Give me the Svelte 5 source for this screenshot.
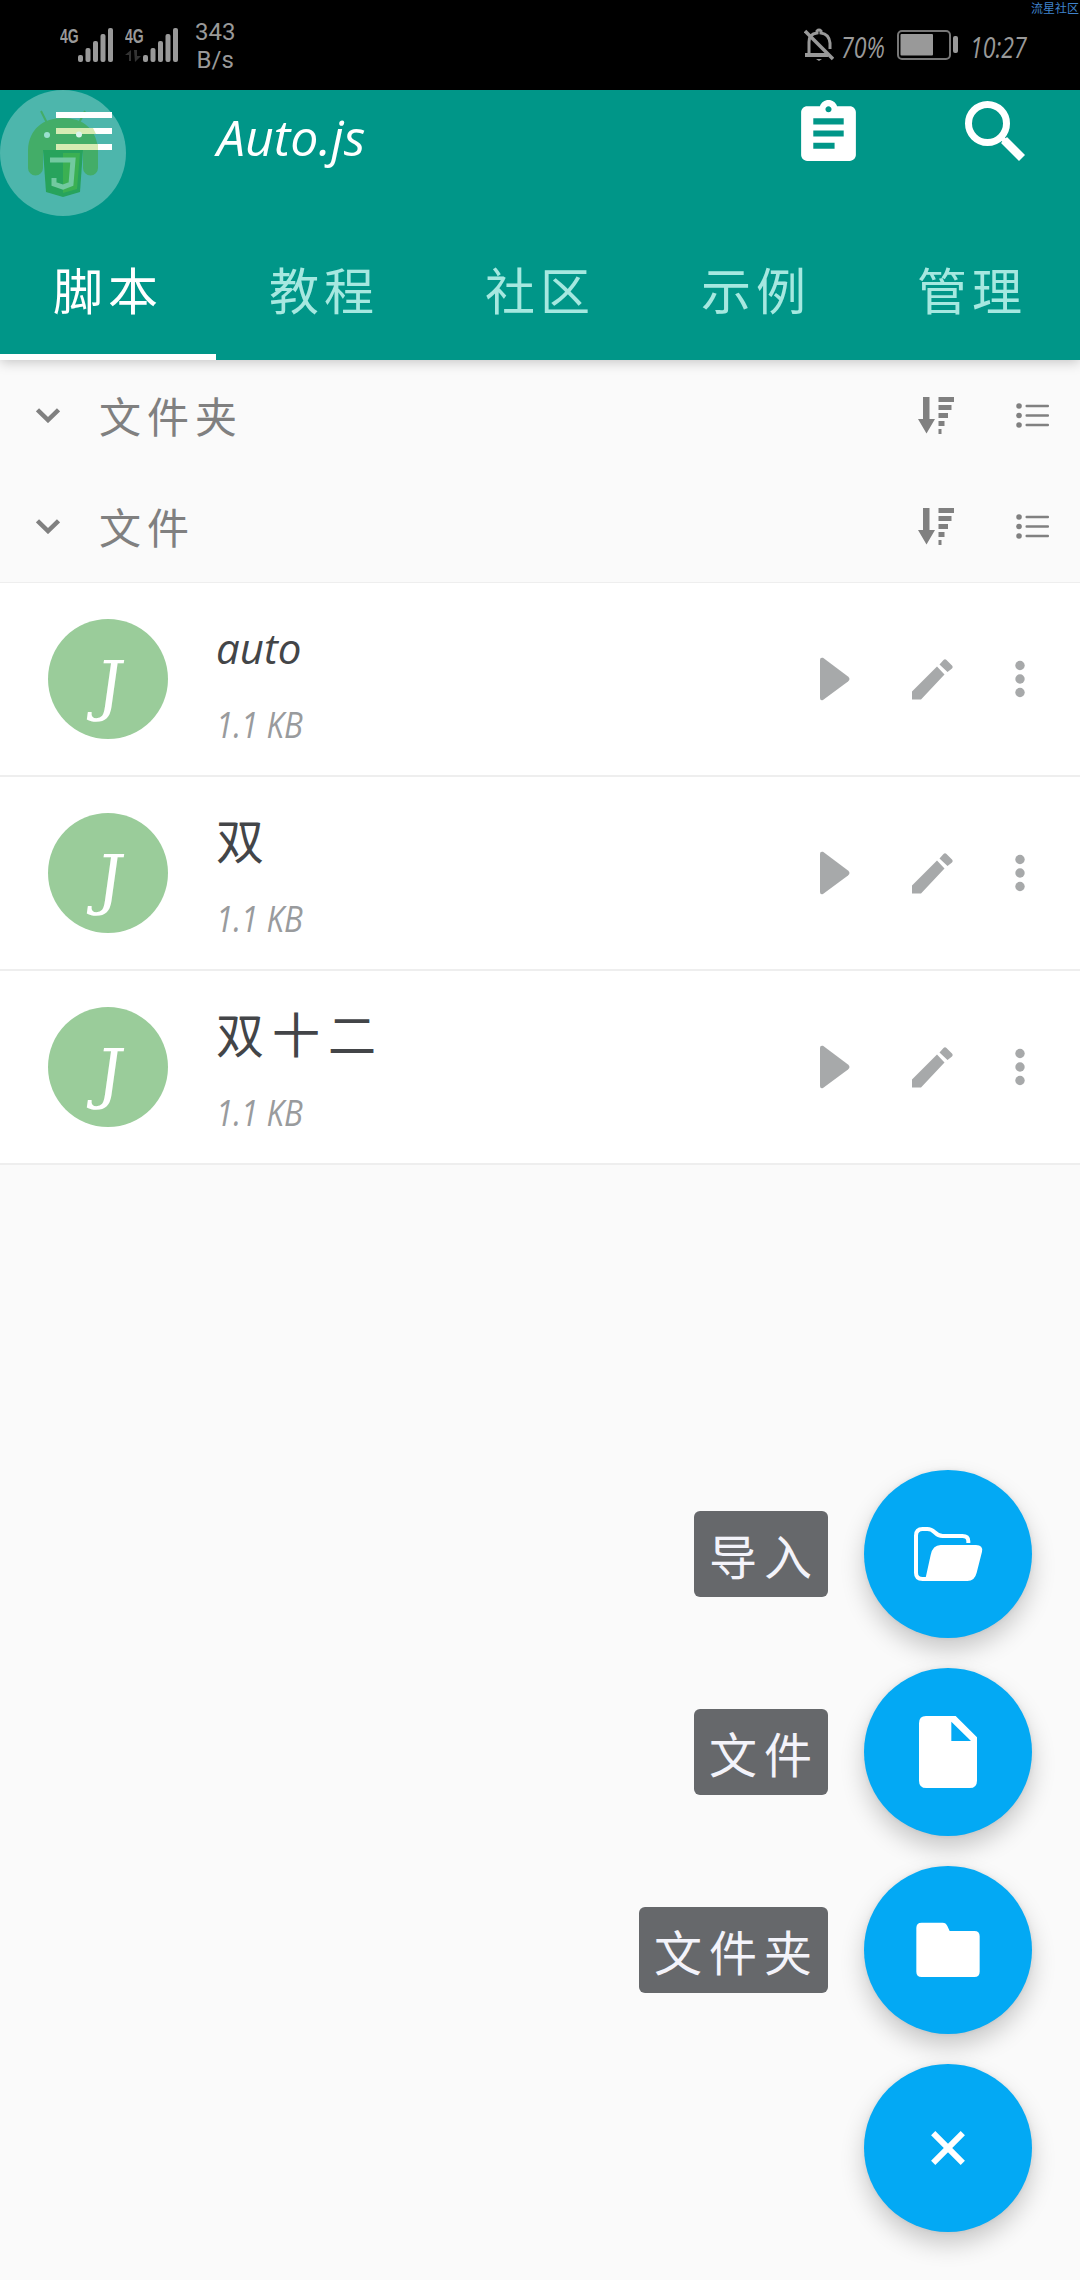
<script lang="ts">
	const tabs = ['脚本', '教程', '社区', '示例', '管理'];
	const sections = ['文件夹', '文件'];
	const files = [
		{ name: 'auto', size: '1.1 KB' },
		{ name: '双', size: '1.1 KB' },
		{ name: '双十二', size: '1.1 KB' }
	];
	const actions = [
		{ label: '导入', icon: 'import' },
		{ label: '文件', icon: 'file' },
		{ label: '文件夹', icon: 'folder' },
		{ label: '', icon: 'close' }
	];

	let activeTab = $state(0);

	const isLatin = (text: string) => /^[\w.]+$/.test(text);
</script>

{#snippet signal(data: boolean)}
	<div class="signal">
		<span class="network">4G</span>
		<svg width="54" height="34" viewBox="0 0 54 34" fill="#999">
			{#if data}
				<path d="M0 27l6-5v11H4v-6zM9 22h3v6h4l-6 6z" fill="#333" />
			{/if}
			<rect x="18" y="27" width="5" height="7" rx="2" />
			<rect x="25.500" y="20" width="5" height="14" rx="2" />
			<rect x="33" y="13" width="5" height="21" rx="2" />
			<rect x="40.500" y="6" width="5" height="28" rx="2" />
			<rect x="48" y="0" width="5" height="34" rx="2" />
		</svg>
	</div>
{/snippet}

<div class="screen">
	<div class="status">
		{@render signal(false)}
		{@render signal(true)}
		<div class="speed"><span>343</span><span>B/s</span></div>
		<svg class="bell" width="30" height="34" viewBox="0 0 30 34" fill="none" stroke="#999">
			<path d="M5 26V14q0-8 8-9V3q2-2 4 0v2q8 1 9 10v6" stroke-width="3" />
			<path d="M1 27h23" stroke-width="4" />
			<path d="M1 3l28 28" stroke-width="3.500" />
			<path d="M12 31h6l-3 2z" fill="#999" stroke="none" />
		</svg>
		<span class="percent">70%</span>
		<svg class="battery" width="62" height="30" viewBox="0 0 62 30">
			<rect x="1" y="1" width="52" height="28" rx="4" fill="none" stroke="#777" stroke-width="2" />
			<rect x="3.500" y="4" width="32.500" height="21.500" rx="1" fill="#999" />
			<rect x="56" y="6" width="5" height="17" rx="2" fill="#999" />
		</svg>
		<span class="time">10:27</span>
		<span class="community">流星社区</span>
	</div>

	<header>
		<div class="toolbar">
			<svg width="72" height="72" viewBox="0 0 72 72" fill="#fff">
				<path d="M8 16h56v6H8zM8 32h56v6H8zM8 48h56v6H8z" />
			</svg>
			<h1>Auto.js</h1>
			<svg class="log" width="73" height="73" viewBox="0 0 24 24" fill="#fff">
				<path d="M19 3h-4.180C14.400 1.840 13.300 1 12 1c-1.300 0-2.400.840-2.820 2H5c-1.100 0-2 .9-2 2v14c0 1.100.9 2 2 2h14c1.100 0 2-.9 2-2V5c0-1.100-.9-2-2-2zm-7 0c.55 0 1 .45 1 1s-.45 1-1 1-1-.45-1-1 .45-1 1-1zm2 14H7v-2h7v2zm3-4H7v-2h10v2zm0-4H7V7h10v2z" />
			</svg>
			<svg class="search" width="72" height="72" viewBox="0 0 72 72" fill="none" stroke="#fff">
				<circle cx="27.500" cy="27.500" r="19" stroke-width="7" />
				<path d="M40 40l5 5" stroke-width="5" />
				<path d="M44 44l18 18" stroke-width="8.500" />
			</svg>
		</div>

		<div class="floating">
			<svg width="126" height="126" viewBox="0 0 126 126">
				<circle cx="63" cy="63" r="63" fill="#4db6ac" />
				<path d="M41 21l6 12M85 21l-6 12" stroke="#43ad68" stroke-width="2" />
				<path d="M28 60C29 39 43 28 63 28s34 11 35 32v18a7.500 7.500 0 0 1-15 0V60H43v18a7.500 7.500 0 0 1-15 0z" fill="#43ad68" />
				<path d="M43 60h40l-3 42-17 5-17-5z" fill="#27a35c" />
				<path d="M63 63h17l-3 36-14 4z" fill="#3bb052" />
				<path d="M50 70h23l-2 24-8 3-9-3v-6" fill="none" stroke="#72c9a0" stroke-width="5" />
				<circle cx="47" cy="45" r="3" fill="#9be0cf" />
				<path d="M56 22h56v6H56zM56 38h56v6H56zM56 54h56v6H56z" fill="#fff" />
				<path d="M56 38h37l3 6H56zM56 54h42v6H56z" fill="#d6ebb3" />
				<circle cx="79" cy="44.500" r="3" fill="#d9f3ec" />
			</svg>
		</div>

		<nav>
			{#each tabs as tab, i}
				<button class="tab" class:active={activeTab === i} onclick={() => (activeTab = i)}>{tab}</button>
			{/each}
		</nav>
	</header>

	<main>
		{#each sections as section}
			<div class="section">
				<svg width="24" height="15" viewBox="0 0 24 15" fill="none" stroke="#808080" stroke-width="4.500">
					<path d="M1.500 1.800L12 12 22.500 1.800" />
				</svg>
				<span class="section-name">{section}</span>
				<svg width="36" height="37" viewBox="0 0 36 37" fill="#808080">
					<path d="M5 0h6.500v22H17L8.500 36.500 0 22h5z" />
					<path d="M20.500 0H36v5H20.500zM20.500 8h13v5h-13zM20.500 16H30v5h-9.500zM20.500 24h6v5h-6zM20.500 32h3v5h-3z" />
				</svg>
				<svg class="list-icon" width="33" height="25" viewBox="0 0 33 25" fill="#808080">
					{#each [3, 12.5, 22] as y}
						<circle cx="3" cy={y} r="2.800" />
						<rect x="9.500" y={y - 1.3} width="23.500" height="2.600" rx="1" />
					{/each}
				</svg>
			</div>
		{/each}

		<ul>
			{#each files as file}
				<li>
					<div class="avatar"><span>J</span></div>
					<div class="info">
						<span class="name" class:latin={isLatin(file.name)}>{file.name}</span>
						<span class="size">{file.size}</span>
					</div>
					<div class="controls">
						<svg width="30" height="44" viewBox="0 0 30 44" fill="#a7a9aa">
							<path d="M0 3Q0 0 3 .8L28 19.500q3 2.500 0 5L3 43q-3 1-3-2z" />
						</svg>
						<svg width="41" height="41" viewBox="0 0 41 41" fill="#a7a9aa">
							<path d="M0 32.500l25-25 7.500 8L9 40.500H0zM27.500 5.500l4-4.500q1.500-1.500 3 0l5.500 5.500q1.300 1.500 0 3L35.500 13z" />
						</svg>
						<svg width="10" height="38" viewBox="0 0 10 38" fill="#a7a9aa">
							<circle cx="5" cy="5.500" r="4.700" />
							<circle cx="5" cy="19" r="4.700" />
							<circle cx="5" cy="32.500" r="4.700" />
						</svg>
					</div>
				</li>
			{/each}
		</ul>
	</main>

	<div class="actions">
		{#each actions as action}
			<div class="action">
				{#if action.label}
					<span class="label">{action.label}</span>
				{/if}
				<button class="fab" aria-label={action.label || '关闭'}>
					{#if action.icon === 'import'}
						<svg width="72" height="72" viewBox="876 234 216 216">
							<path d="M1045 309v-5q0-16-18-16h-59q-13 0-25-12-9-9-21-9h-14q-20 0-20 20v111q0 19 20 19h17" fill="none" stroke="#fff" stroke-width="12" />
							<path d="M962 315h106q22 0 18 20l-16 63q-6 25-28 25H906q9-2 12-14l14-64q6-30 30-30z" fill="#fff" />
						</svg>
					{:else if action.icon === 'file'}
						<svg width="72" height="72" viewBox="876 828 216 216">
							<path fill="#fff" fill-rule="evenodd" d="M918 828h89l64 64v130q0 22-22 22H919q-22 0-22-22V850q0-22 21-22zM994 845v58h59z" />
						</svg>
					{:else if action.icon === 'folder'}
						<svg width="72" height="72" viewBox="876 222 216 216">
							<path fill="#fff" d="M905 248h63q10 0 14 10l7 15h74q16 0 16 16v106q0 16-16 16H905q-16 0-16-16V264q0-16 16-16z" />
						</svg>
					{:else}
						<svg width="34" height="34" viewBox="0 0 34 34" stroke="#fff" stroke-width="6">
							<path d="M2.200 2.200l29.600 29.600M31.800 2.200L2.200 31.800" />
						</svg>
					{/if}
				</button>
			</div>
		{/each}
	</div>
</div>

<style>
	:global(body) {
		margin: 0;
	}

	.screen {
		position: relative;
		width: 1080px;
		height: 2280px;
		overflow: hidden;
		background: #fafafa;
		font-family: 'Noto Sans CJK SC', sans-serif;
		font-weight: 400;
	}

	svg {
		display: block;
		flex: none;
	}

	button {
		padding: 0;
		border: none;
		font: inherit;
	}

	.status {
		position: relative;
		display: flex;
		align-items: center;
		box-sizing: border-box;
		height: 90px;
		padding: 0 54px 0 60px;
		background: #000;
		color: #999;
	}

	.signal {
		position: relative;
		width: 65px;
	}

	.network {
		position: absolute;
		top: -2px;
		left: 0;
		font: bold 20px/20px 'Liberation Sans', sans-serif;
		transform: scaleX(0.7);
		transform-origin: left;
	}

	.speed {
		display: flex;
		flex-direction: column;
		align-items: center;
		margin: 2px auto 0 5px;
		font: 24px/28px Roboto, sans-serif;
	}

	.percent,
	.time {
		font: italic 400 30px/30px 'Open Sans', sans-serif;
		transform-origin: left;
		white-space: nowrap;
	}

	.percent {
		width: 56px;
		margin: 3px 0 0 7px;
		transform: scaleX(0.77);
	}

	.time {
		width: 56px;
		margin: 3px 0 0 11px;
		transform: scaleX(0.77);
	}

	.community {
		position: absolute;
		top: 0;
		right: 1px;
		font-size: 12px;
		line-height: 15px;
		color: #3f83cc;
	}

	header {
		position: relative;
		height: 270px;
		background: #009688;
		color: #fff;
		box-shadow: 0 2px 12px rgba(0, 0, 0, 0.22);
	}

	.toolbar {
		display: flex;
		align-items: center;
		box-sizing: border-box;
		height: 126px;
		padding: 0 48px 42px;
	}

	h1 {
		flex: 1;
		margin: 10px 0 0 97px;
		font: italic 500 50px/60px 'Open Sans', sans-serif;
	}

	.log {
		margin-top: 3px;
	}

	.search {
		margin-left: 95px;
	}

	.floating {
		position: absolute;
		top: 0;
		left: 0;
	}

	nav {
		display: grid;
		grid-template-columns: repeat(5, 1fr);
		height: 144px;
	}

	.tab {
		padding-top: 5px;
		border-bottom: 6px solid transparent;
		background: none;
		color: #a6e8e0;
		font-size: 50px;
		letter-spacing: 5px;
	}

	.tab.active {
		border-color: #fff;
		color: #fff;
	}

	.section {
		display: flex;
		align-items: center;
		height: 111px;
		padding: 0 31px 0 36px;
		color: #808080;
	}

	.section-name {
		flex: 1;
		margin: 0 0 2px 39px;
		font-size: 42px;
		letter-spacing: 6px;
	}

	.list-icon {
		margin-left: 62px;
	}

	ul {
		margin: 0;
		padding: 0;
		list-style: none;
		border-top: 1px solid #eee;
		background: #fff;
	}

	li {
		display: flex;
		align-items: center;
		box-sizing: border-box;
		height: 194px;
		padding: 0 55px 0 48px;
		border-bottom: 2px solid #eee;
	}

	.avatar {
		display: flex;
		justify-content: center;
		width: 120px;
		height: 120px;
		border-radius: 50%;
		background: #9acc9a;
		color: #fff;
	}

	.avatar span {
		margin: 30px 0 0 2px;
		font: 400 66px/74px 'DejaVu Serif', serif;
		transform: skewX(-8deg);
	}

	.info {
		flex: 1;
		display: flex;
		flex-direction: column;
		gap: 31px;
		margin-left: 48px;
	}

	.name {
		height: 60px;
		color: #434548;
		font-size: 48px;
		line-height: 60px;
		letter-spacing: 8px;
	}

	.name.latin {
		font: italic 500 42px/67px 'Open Sans', sans-serif;
		letter-spacing: 0;
	}

	.size {
		color: #999b9d;
		font: italic 400 36px/40px 'Open Sans', sans-serif;
		transform: scaleX(0.87);
		transform-origin: left;
	}

	.controls {
		display: flex;
		align-items: center;
		gap: 64px 62px;
	}

	.actions {
		position: absolute;
		right: 48px;
		bottom: 48px;
		display: flex;
		flex-direction: column;
		align-items: flex-end;
		gap: 30px;
	}

	.action {
		display: flex;
		align-items: center;
		gap: 36px;
	}

	.label {
		height: 86px;
		padding: 0 9px 0 15px;
		border-radius: 6px;
		background: #66686b;
		color: #f3f3fa;
		font-size: 48px;
		line-height: 86px;
		letter-spacing: 7px;
	}

	.fab {
		display: flex;
		align-items: center;
		justify-content: center;
		width: 168px;
		height: 168px;
		border-radius: 50%;
		background: #03a9f4;
		box-shadow: 0 12px 24px rgba(0, 0, 0, 0.2), 0 0 5px rgba(0, 0, 0, 0.08);
	}
</style>
